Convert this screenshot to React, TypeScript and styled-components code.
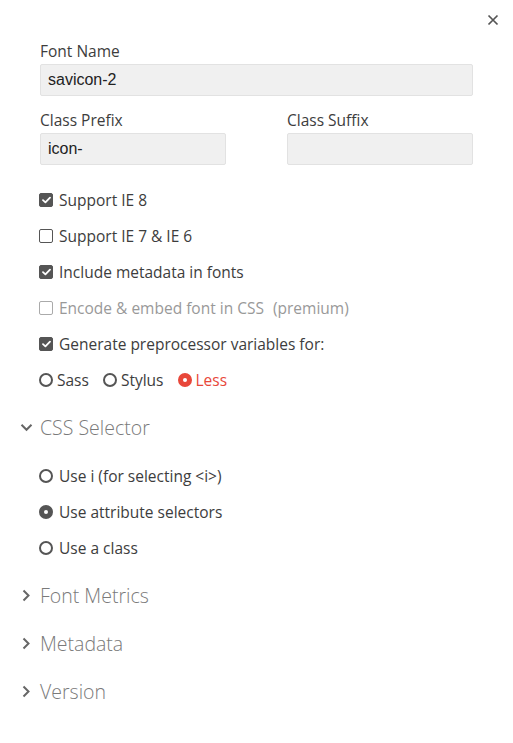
import React from "react";
import styled, { createGlobalStyle } from "styled-components";

const Global = createGlobalStyle`
  html, body { margin: 0; padding: 0; background: #fff; }
  body { font-family: "Open Sans", "Noto Sans", sans-serif; color: #3d3d3d; }
  * { box-sizing: border-box; }
`;

const Panel = styled.div`
  width: 513px;
  height: 743px;
  background: #fff;
  display: flex;
  flex-direction: column;
  padding: 0 40px 0 20px;
`;

const TopBar = styled.div`
  height: 41px;
  display: flex;
  justify-content: flex-end;
  align-items: flex-start;
  margin-right: -40px;
`;

const Close = styled.button`
  width: 40px;
  height: 40px;
  border: 0;
  background: none;
  padding: 0;
  color: #555;
  display: flex;
  align-items: center;
  justify-content: center;
  cursor: pointer;
`;

const Fields = styled.div`
  padding-left: 20px;
  display: flex;
  flex-direction: column;
`;

const Label = styled.div`
  font-size: 15.5px;
  line-height: 20px;
  height: 20px;
  color: #3d3d3d;
`;

const Field = styled.div`
  display: flex;
  flex-direction: column;
  gap: 3px;
`;

const TwoCols = styled.div`
  display: grid;
  grid-template-columns: 186px 186px;
  justify-content: space-between;
  margin-top: 14px;
`;

const Input = styled.input`
  height: 32px;
  width: 100%;
  background: #f0f0f0;
  border: 1px solid #e2e2e2;
  border-radius: 2px;
  padding: 0 7px;
  font-family: "Liberation Sans", Arial, sans-serif;
  font-size: 16px;
  color: #222;
  outline: none;
`;

const Options = styled.div<{ $mt: number }>`
  display: flex;
  flex-direction: column;
  margin-top: ${(p) => p.$mt}px;
`;

const Row = styled.label<{ $disabled?: boolean }>`
  height: 36px;
  display: flex;
  align-items: center;
  gap: 6px;
  margin-left: -1px;
  font-size: 15.5px;
  color: ${(p) => (p.$disabled ? "#999" : "#3d3d3d")};
`;

const Box = styled.span<{ $checked?: boolean; $disabled?: boolean }>`
  width: 14px;
  height: 14px;
  border-radius: 2px;
  flex: none;
  display: flex;
  align-items: center;
  justify-content: center;
  background: ${(p) => (p.$checked ? "#555" : "#fff")};
  border: 1.5px solid ${(p) => (p.$checked ? "#555" : p.$disabled ? "#aaa" : "#555")};
`;

const Premium = styled.span`
  margin-left: 9px;
`;

const RadioGroup = styled.div`
  height: 36px;
  display: flex;
  align-items: center;
  gap: 14px;
  margin-left: -1px;
`;

const RadioItem = styled.label<{ $active?: boolean; $color?: string }>`
  display: flex;
  align-items: center;
  gap: 4px;
  font-size: 15.5px;
  color: ${(p) => (p.$active && p.$color ? p.$color : "#3d3d3d")};
`;

const Dot = styled.span<{ $checked?: boolean; $color: string }>`
  width: 14px;
  height: 14px;
  border-radius: 50%;
  flex: none;
  border: 2px solid ${(p) => p.$color};
  background: ${(p) => (p.$checked ? p.$color : "#fff")};
  display: flex;
  align-items: center;
  justify-content: center;
  &::after {
    content: "";
    width: 4px;
    height: 4px;
    border-radius: 50%;
    background: #fff;
    display: ${(p) => (p.$checked ? "block" : "none")};
  }
`;

const Header = styled.div<{ $mt?: number }>`
  height: 48px;
  display: flex;
  align-items: center;
  margin-top: ${(p) => p.$mt ?? 0}px;
  font-size: 19.5px;
  color: #7a7a7a;
  font-weight: 300;
`;

const Chevron = styled.span`
  width: 20px;
  display: flex;
  align-items: center;
  color: #666;
`;

const SubOptions = styled.div`
  padding-left: 20px;
  display: flex;
  flex-direction: column;
  margin-top: 7px;
  margin-bottom: 5px;
`;

const Check = () => (
  <svg width="9" height="8" viewBox="0 0 9 8">
    <path d="M1 4.2 L3.4 6.4 L8 1.6" fill="none" stroke="#fff" strokeWidth="1.8" strokeLinecap="round" strokeLinejoin="round" />
  </svg>
);

const Down = () => (
  <svg width="13" height="9" viewBox="0 0 13 9">
    <path d="M1.5 1.8 L6.5 6.8 L11.5 1.8" fill="none" stroke="currentColor" strokeWidth="2" />
  </svg>
);

const Right = () => (
  <svg width="12" height="13" viewBox="0 0 12 13">
    <path d="M3.5 1.5 L8.5 6.5 L3.5 11.5" fill="none" stroke="currentColor" strokeWidth="2" />
  </svg>
);

const CheckRow = ({ label, checked, disabled, extra }: { label: string; checked?: boolean; disabled?: boolean; extra?: string }) => (
  <Row $disabled={disabled}>
    <Box $checked={checked} $disabled={disabled}>{checked && <Check />}</Box>
    <span>
      {label}
      {extra && <Premium>{extra}</Premium>}
    </span>
  </Row>
);

const RadioRow = ({ label, checked }: { label: string; checked?: boolean }) => (
  <Row>
    <Dot $checked={checked} $color="#555" />
    <span>{label}</span>
  </Row>
);

export default function App() {
  return (
    <>
      <Global />
      <Panel>
        <TopBar>
          <Close aria-label="close">
            <svg width="12" height="12" viewBox="0 0 12 12">
              <path d="M1.5 1.5 L10.5 10.5 M10.5 1.5 L1.5 10.5" stroke="#555" strokeWidth="1.7" />
            </svg>
          </Close>
        </TopBar>
        <Fields>
          <Field>
            <Label>Font Name</Label>
            <Input defaultValue="savicon-2" />
          </Field>
          <TwoCols>
            <Field>
              <Label>Class Prefix</Label>
              <Input defaultValue="icon-" />
            </Field>
            <Field>
              <Label>Class Suffix</Label>
              <Input defaultValue="" />
            </Field>
          </TwoCols>
          <Options $mt={17}>
            <CheckRow label="Support IE 8" checked />
            <CheckRow label="Support IE 7 & IE 6" />
            <CheckRow label="Include metadata in fonts" checked />
            <CheckRow label="Encode & embed font in CSS" extra="(premium)" disabled />
            <CheckRow label="Generate preprocessor variables for:" checked />
            <RadioGroup>
              <RadioItem>
                <Dot $color="#555" />
                Sass
              </RadioItem>
              <RadioItem>
                <Dot $color="#555" />
                Stylus
              </RadioItem>
              <RadioItem $active $color="#e8473a">
                <Dot $checked $color="#e8473a" />
                Less
              </RadioItem>
            </RadioGroup>
          </Options>
        </Fields>
        <Header $mt={5}>
          <Chevron><Down /></Chevron>
          CSS Selector
        </Header>
        <SubOptions>
          <RadioRow label="Use i (for selecting <i>)" />
          <RadioRow label="Use attribute selectors" checked />
          <RadioRow label="Use a class" />
        </SubOptions>
        <Header>
          <Chevron><Right /></Chevron>
          Font Metrics
        </Header>
        <Header>
          <Chevron><Right /></Chevron>
          Metadata
        </Header>
        <Header>
          <Chevron><Right /></Chevron>
          Version
        </Header>
      </Panel>
    </>
  );
}
